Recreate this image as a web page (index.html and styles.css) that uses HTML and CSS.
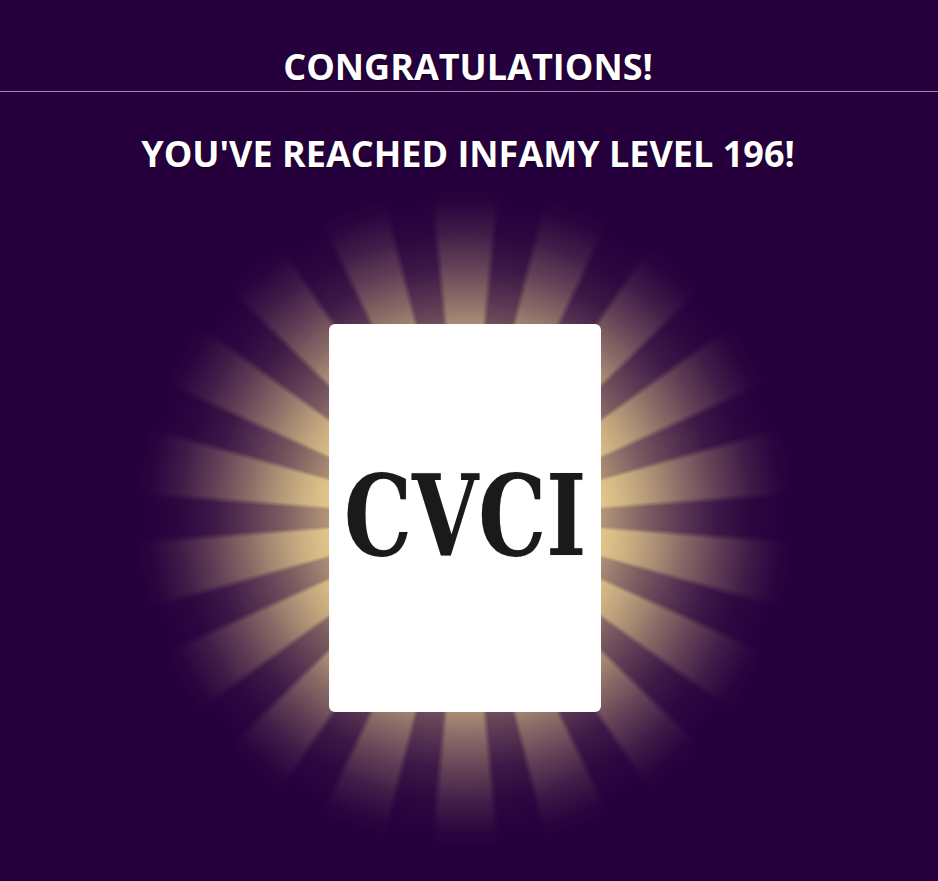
FILE: index.html
```html
<!DOCTYPE html>
<html lang="en">
<head>
<meta charset="utf-8">
<title>Level Up</title>
<link rel="stylesheet" href="styles.css">
</head>
<body>
<main class="screen">
  <header class="header">
    <h1 class="title">CONGRATULATIONS!</h1>
  </header>
  <h2 class="subtitle">YOU'VE REACHED INFAMY LEVEL 196!</h2>
  <section class="stage">
    <div class="burst-glow"></div>
    <div class="burst-rays"></div>
    <div class="card">
      <span class="card-logo">CVCI</span>
    </div>
  </section>
</main>
</body>
</html>
```

FILE: styles.css
```css
html, body {
  margin: 0;
  padding: 0;
}
body {
  background: #26003d;
  width: 938px;
  height: 881px;
  overflow: hidden;
  font-family: "Open Sans", "Noto Sans", sans-serif;
  color: #fff;
}
.screen {
  display: flex;
  flex-direction: column;
  align-items: stretch;
}
.header {
  padding-top: 42px;
  border-bottom: 1px solid #9d86aa;
}
.title {
  margin: 0;
  font-size: 36px;
  font-weight: 700;
  text-align: center;
  line-height: 49px;
  padding-right: 2px;
  text-shadow: 0 1px 2px rgba(0,0,0,0.6);
}
.subtitle {
  margin: 37px 0 0;
  font-size: 36px;
  font-weight: 700;
  text-align: center;
  line-height: 49px;
  padding-right: 2px;
  text-shadow: 0 1px 2px rgba(0,0,0,0.6);
}
.stage {
  display: grid;
  place-items: center;
  margin-right: 8px;
  height: 680px;
}
.burst-glow, .burst-rays, .card {
  grid-area: 1 / 1;
}
.burst-glow, .burst-rays {
  width: 680px;
  height: 680px;
  border-radius: 50%;
}
.burst-glow {
  background: radial-gradient(circle closest-side,
    rgba(240, 215, 145, 0.92) 0%,
    rgba(240, 215, 145, 0.7) 40%,
    rgba(240, 215, 145, 0.42) 54%,
    rgba(240, 215, 145, 0.26) 64%,
    rgba(240, 215, 145, 0.11) 74%,
    rgba(240, 215, 145, 0.03) 84%,
    rgba(240, 215, 145, 0) 94%);
}
.burst-rays {
  background: repeating-conic-gradient(from -5deg,
    rgba(240, 215, 145, 1) 0deg 10deg,
    rgba(240, 215, 145, 0) 11.5deg 18.5deg,
    rgba(240, 215, 145, 1) 20deg);
  -webkit-mask-image: radial-gradient(circle closest-side, #000 20%, rgba(0,0,0,0.75) 40%, rgba(0,0,0,0.33) 64%, rgba(0,0,0,0.22) 74%, rgba(0,0,0,0.1) 84%, rgba(0,0,0,0.02) 93%, transparent 97%);
  mask-image: radial-gradient(circle closest-side, #000 20%, rgba(0,0,0,0.75) 40%, rgba(0,0,0,0.33) 64%, rgba(0,0,0,0.22) 74%, rgba(0,0,0,0.1) 84%, rgba(0,0,0,0.02) 93%, transparent 97%);
}
.card {
  position: relative;
  width: 272px;
  height: 388px;
  background: #fff;
  border-radius: 6px;
  display: flex;
  align-items: center;
  justify-content: center;
}
.card-logo {
  font-family: "DejaVu Serif Condensed", "DejaVu Serif", serif;
  font-weight: 700;
  font-size: 113px;
  color: #1a1a1a;
  line-height: 1;
  margin-top: -6px;
  transform: scaleX(0.84);
  text-shadow: 0 0 1px #aaa;
}
```
